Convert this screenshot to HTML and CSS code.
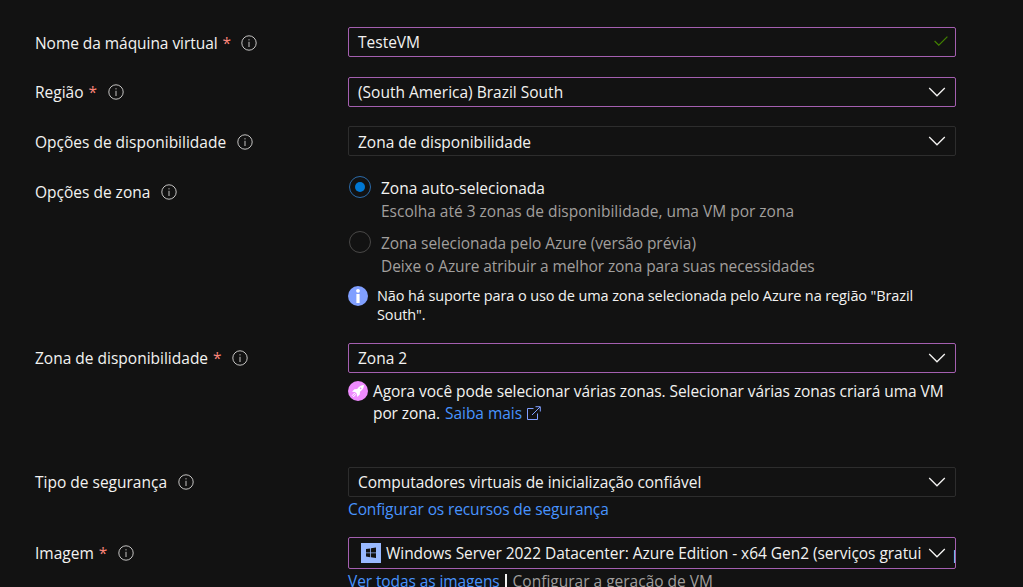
FILE: index.html
```html
<!DOCTYPE html>
<html lang="pt-BR">
<head>
<meta charset="utf-8">
<title>Criar uma máquina virtual</title>
<link rel="stylesheet" href="styles.css">
</head>
<body>
<svg class="defs" aria-hidden="true">
  <symbol id="info" viewBox="0 0 16 16"><circle cx="8" cy="8" r="7.2" fill="none" stroke="currentColor"/><path d="M8 6.8V12M8 4.2v1.2" stroke="currentColor"/></symbol>
  <symbol id="chevron" viewBox="0 0 18 10"><path d="M1.2 1L9 8.8 16.8 1" fill="none" stroke="currentColor" stroke-width="1.3"/></symbol>
</svg>
<main class="form">
  <div class="row row-name">
    <div class="label"><span class="text t-nome">Nome da máquina virtual</span><span class="star">*</span><svg class="info"><use href="#info"/></svg></div>
    <div class="field required"><span class="text t-teste">TesteVM</span><svg class="check" viewBox="0 0 14 10"><path d="M.6 5L4.8 9.2 13.4.6" fill="none" stroke="currentColor" stroke-width="1.2"/></svg></div>
  </div>
  <div class="row row-region">
    <div class="label"><span class="text t-regiao">Região</span><span class="star">*</span><svg class="info"><use href="#info"/></svg></div>
    <div class="field required"><span class="text t-south">(South America) Brazil South</span><svg class="chevron"><use href="#chevron"/></svg></div>
  </div>
  <div class="row row-availability">
    <div class="label"><span class="text t-opcoes">Opções de disponibilidade</span><svg class="info"><use href="#info"/></svg></div>
    <div class="field"><span class="text t-zdisp">Zona de disponibilidade</span><svg class="chevron"><use href="#chevron"/></svg></div>
  </div>
  <div class="row row-options">
    <div class="label"><span class="text t-ozona">Opções de zona</span><svg class="info"><use href="#info"/></svg></div>
    <div class="options">
      <div class="option">
        <span class="radio selected"></span>
        <div class="option-copy"><span class="text t-auto">Zona auto-selecionada</span><span class="text muted t-escolha">Escolha até 3 zonas de disponibilidade, uma VM por zona</span></div>
      </div>
      <div class="option">
        <span class="radio"></span>
        <div class="option-copy muted"><span class="text t-azure">Zona selecionada pelo Azure (versão prévia)</span><span class="text t-deixe">Deixe o Azure atribuir a melhor zona para suas necessidades</span></div>
      </div>
      <div class="notice">
        <svg class="badge" viewBox="0 0 20 20"><circle cx="10" cy="10" r="10" fill="#809fff"/><circle cx="10" cy="4.8" r="1.9" fill="#fff"/><rect x="8.4" y="8" width="3.2" height="9" fill="#fff"/></svg>
        <div class="notice-copy"><span class="text t-nao">Não há suporte para o uso de uma zona selecionada pelo Azure na região "Brazil</span><span class="text t-nao">South".</span></div>
      </div>
    </div>
  </div>
  <div class="row row-zone">
    <div class="label"><span class="text t-zdisp">Zona de disponibilidade</span><span class="star">*</span><svg class="info"><use href="#info"/></svg></div>
    <div>
      <div class="field required"><span class="text t-zona2">Zona 2</span><svg class="chevron"><use href="#chevron"/></svg></div>
      <div class="promo">
        <svg class="badge" viewBox="0 0 20 20"><circle cx="10" cy="10" r="10" fill="#ef8bff"/><path d="M16 4C13.500 4 11 5.400 9.200 8L6.400 8.200 4 10.800l3 .2 2 2L9.200 16l2.600-2.400.2-2.800C14.600 9 16 6.500 16 4z" fill="#fff"/><circle cx="12.600" cy="7.400" r=".8" fill="#ef8bff"/><path d="M6.800 12L4 14.800M8 13.200L5.200 16" stroke="#fff"/></svg>
        <div class="promo-copy"><span class="text t-agora">Agora você pode selecionar várias zonas. Selecionar várias zonas criará uma VM</span><div class="promo-line"><span class="text t-por">por zona.</span><a class="text link t-saiba">Saiba mais</a><svg class="external" viewBox="0 0 14 14"><path d="M6.500 2.500h-6v11h10v-6M5 9l8-8M8.500.7h4.800v4.800" fill="none" stroke="currentColor"/></svg></div></div>
      </div>
    </div>
  </div>
  <div class="row row-security">
    <div class="label"><span class="text t-tipo">Tipo de segurança</span><svg class="info"><use href="#info"/></svg></div>
    <div>
      <div class="field"><span class="text t-comp">Computadores virtuais de inicialização confiável</span><svg class="chevron"><use href="#chevron"/></svg></div>
      <a class="text link below t-config">Configurar os recursos de segurança</a>
    </div>
  </div>
  <div class="row row-image">
    <div class="label"><span class="text t-imagem">Imagem</span><span class="star">*</span><svg class="info"><use href="#info"/></svg></div>
    <div>
      <div class="field required image-field">
        <svg class="windows" viewBox="0 0 20 20"><path d="M0 0h20v20H0z" fill="#99b9ff"/><path d="M5 6l4.200-.6v4H5zM10 5.300l5-.7v4.800h-5zM5 10.200h4.200v4L5 13.600zM10 10.200h5V15l-5-.7z" fill="#111"/></svg>
        <span class="text t-win">Windows Server 2022 Datacenter: Azure Edition - x64 Gen2 (serviços gratui</span>
        <svg class="chevron"><use href="#chevron"/></svg><span class="overflow text">p</span>
      </div>
      <div class="image-links"><a class="text link t-ver">Ver todas as imagens</a><span class="divider"></span><span class="text disabled t-ger">Configurar a geração de VM</span></div>
    </div>
  </div>
</main>
</body>
</html>
```
FILE: styles.css
```css
* { box-sizing: border-box; }
html, body { height: 100%; }
body { margin: 0; overflow: hidden; background: #121212; color: #f3f2f1; font: 15.5px/22px "Open Sans", "Noto Sans", sans-serif; }
.defs { display: none; }
.form { height: 587px; padding: 27px 0 0 35px; overflow: hidden; }
.row { display: grid; grid-template-columns: 313px 608px; align-items: start; }
.row-name { height: 50px; }
.row-region { height: 49px; }
.row-availability { height: 50px; }
.row-options { height: 167px; }
.row-zone { height: 124px; }
.row-security { height: 70px; }
.text { white-space: nowrap; }
.label { display: flex; align-items: center; height: 31px; }
.row-region .label, .row-zone .label, .row-security .label { height: 30px; }
.row-availability .label, .row-options .label { height: 32px; }
.star { width: 7px; margin-left: 5px; color: #f98479; }
.info { width: 16px; height: 16px; margin-left: 12px; color: #c4c3c2; }
.row-name .info, .row-availability .info, .row-options .info, .row-security .info { margin-left: 11px; }
.field { display: flex; align-items: center; justify-content: space-between; height: 30px; padding: 0 9px; border: 1px solid #2d2d2d; border-radius: 2px; }
.required { border-color: #a45fb0; }
.row-availability .field .text { padding-top: 2px; }
.chevron { flex: none; width: 18px; height: 10px; color: #f3f2f1; }
.check { width: 14px; height: 10px; margin: -2px -2px 0 0; color: #428000; }
.option { display: flex; gap: 10px; height: 55px; padding-left: 1px; }
.radio { display: flex; align-items: center; justify-content: center; width: 22px; height: 22px; border: 1px solid #494847; border-radius: 50%; }
.selected { border-color: #2b6aa8; }
.selected::after { width: 10px; height: 10px; border-radius: 50%; background: #0078d4; content: ""; }
.option-copy { display: flex; flex-direction: column; padding-top: 1px; line-height: 23px; }
.muted, .disabled { color: #a19f9d; }
.notice { display: flex; gap: 9px; }
.badge { flex: none; width: 20px; height: 20px; }
.notice-copy { display: flex; flex-direction: column; font-size: 14.5px; line-height: 19px; }
.promo { display: flex; gap: 5px; padding-top: 8px; }
.promo-copy { display: flex; flex-direction: column; margin-top: -1px; }
.promo-line { display: flex; align-items: center; }
.link { color: #4894fe; }
.t-nome, .t-azure, .t-comp { letter-spacing: -.05px; }
.t-nao { letter-spacing: -.115px; }
.t-agora { letter-spacing: -.07px; }
.t-deixe, .t-ver { letter-spacing: -.1px; }
.t-config { letter-spacing: -.12px; }
.t-por { letter-spacing: -.1px; }
.t-saiba { margin-left: 5px; letter-spacing: -.05px; }
.external { width: 14px; height: 14px; margin-left: 5px; color: #809fff; }
.below { display: block; padding-top: 1px; }
.image-field { height: 32px; padding: 0 0 0 12px; justify-content: flex-start; overflow: hidden; }
.windows { flex: none; width: 20px; height: 20px; margin-right: 5px; }
.t-win { flex: none; width: 535px; margin-right: 7px; letter-spacing: -.04px; }
.overflow { margin-left: 7px; }
.image-links { display: flex; align-items: center; padding-top: 1px; }
.divider { width: 2px; height: 14px; margin: 0 6px 0 5px; background: #f3f2f1; }
```
